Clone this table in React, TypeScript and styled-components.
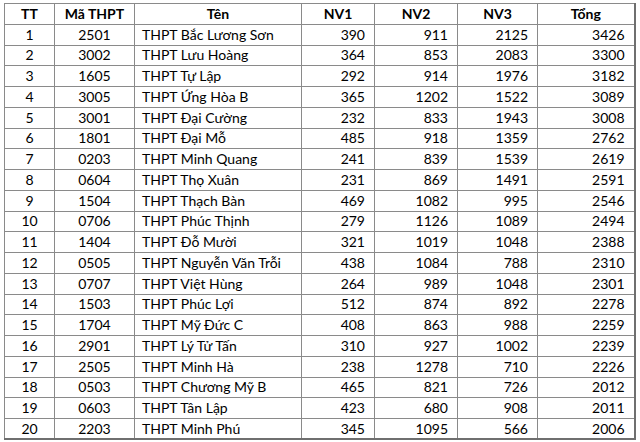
import styled, { createGlobalStyle } from 'styled-components';

const GlobalStyle = createGlobalStyle`
  html, body {
    margin: 0;
    padding: 0;
    background: #ffffff;
  }
`;

const Page = styled.div`
  width: 640px;
  height: 442px;
  padding: 3px 0 0 4px;
  box-sizing: border-box;
  background: #ffffff;
  overflow: hidden;
`;

const Table = styled.table`
  border-collapse: collapse;
  table-layout: fixed;
  width: 630px;
  font-family: Lato, 'Open Sans', sans-serif;
  font-size: 14px;
  color: #000000;
  border-right: 2px solid #6f6f6f;
  border-bottom: 2px solid #6f6f6f;
`;

const Row = styled.tr`
  height: 20.76px;
`;

const HeadCell = styled.th`
  border: 1px solid #8a8a8a;
  padding: 0;
  font-weight: 700;
  text-align: center;
  line-height: 18px;
`;

const Cell = styled.td<{ $align?: 'left' | 'center' | 'right' }>`
  border: 1px solid #8a8a8a;
  padding: ${(p) => (p.$align === 'left' ? '0 0 0 7px' : p.$align === 'right' ? '0 9px 0 0' : '0')};
  text-align: ${(p) => p.$align ?? 'center'};
  line-height: 18px;
  white-space: nowrap;
`;

const columns = [
  { label: 'TT', width: 50 },
  { label: 'Mã THPT', width: 80 },
  { label: 'Tên', width: 167 },
  { label: 'NV1', width: 73 },
  { label: 'NV2', width: 83 },
  { label: 'NV3', width: 80 },
  { label: 'Tổng', width: 97 },
];

const rows: [string, string, number, number, number, number][] = [
  ['2501', 'THPT Bắc Lương Sơn', 390, 911, 2125, 3426],
  ['3002', 'THPT Lưu Hoàng', 364, 853, 2083, 3300],
  ['1605', 'THPT Tự Lập', 292, 914, 1976, 3182],
  ['3005', 'THPT Ứng Hòa B', 365, 1202, 1522, 3089],
  ['3001', 'THPT Đại Cường', 232, 833, 1943, 3008],
  ['1801', 'THPT Đại Mỗ', 485, 918, 1359, 2762],
  ['0203', 'THPT Minh Quang', 241, 839, 1539, 2619],
  ['0604', 'THPT Thọ Xuân', 231, 869, 1491, 2591],
  ['1504', 'THPT Thạch Bàn', 469, 1082, 995, 2546],
  ['0706', 'THPT Phúc Thịnh', 279, 1126, 1089, 2494],
  ['1404', 'THPT Đỗ Mười', 321, 1019, 1048, 2388],
  ['0505', 'THPT Nguyễn Văn Trỗi', 438, 1084, 788, 2310],
  ['0707', 'THPT Việt Hùng', 264, 989, 1048, 2301],
  ['1503', 'THPT Phúc Lợi', 512, 874, 892, 2278],
  ['1704', 'THPT Mỹ Đức C', 408, 863, 988, 2259],
  ['2901', 'THPT Lý Tử Tấn', 310, 927, 1002, 2239],
  ['2505', 'THPT Minh Hà', 238, 1278, 710, 2226],
  ['0503', 'THPT Chương Mỹ B', 465, 821, 726, 2012],
  ['0603', 'THPT Tân Lập', 423, 680, 908, 2011],
  ['2203', 'THPT Minh Phú', 345, 1095, 566, 2006],
];

export default function App() {
  return (
    <Page>
      <GlobalStyle />
      <Table>
        <colgroup>
          {columns.map((c) => (
            <col key={c.label} style={{ width: c.width }} />
          ))}
        </colgroup>
        <thead>
          <Row>
            {columns.map((c) => (
              <HeadCell key={c.label}>{c.label}</HeadCell>
            ))}
          </Row>
        </thead>
        <tbody>
          {rows.map((r, i) => (
            <Row key={r[0]}>
              <Cell>{i + 1}</Cell>
              <Cell>{r[0]}</Cell>
              <Cell $align="left">{r[1]}</Cell>
              <Cell $align="right">{r[2]}</Cell>
              <Cell $align="right">{r[3]}</Cell>
              <Cell $align="right">{r[4]}</Cell>
              <Cell $align="right">{r[5]}</Cell>
            </Row>
          ))}
        </tbody>
      </Table>
    </Page>
  );
}
